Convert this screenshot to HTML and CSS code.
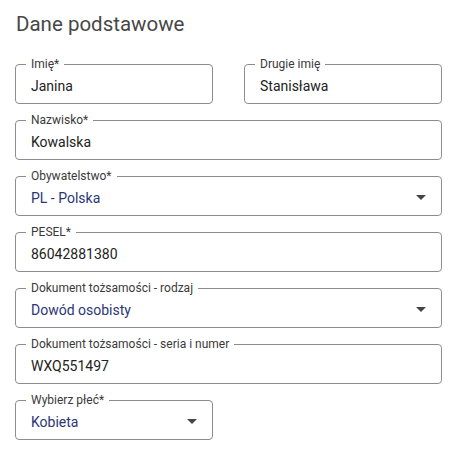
FILE: index.html
```html
<!DOCTYPE html>
<html lang="pl">
<head>
    <meta charset="UTF-8">
    <meta name="viewport" content="width=device-width, initial-scale=1.0">
    <title>Dane podstawowe</title>
    <link rel="stylesheet" href="styles.css">
</head>
<body>
    <div class="form">
        <h2 class="title">Dane podstawowe</h2>
        <div class="grid">
            <fieldset class="field">
                <legend>Imię*</legend>
                <div class="control"><input type="text" value="Janina"></div>
            </fieldset>
            <fieldset class="field">
                <legend>Drugie imię</legend>
                <div class="control"><input type="text" value="Stanisława"></div>
            </fieldset>
            <fieldset class="field wide">
                <legend>Nazwisko*</legend>
                <div class="control"><input type="text" value="Kowalska"></div>
            </fieldset>
            <fieldset class="field wide">
                <legend>Obywatelstwo*</legend>
                <div class="control">
                    <select><option>PL - Polska</option></select>
                    <svg class="arrow" width="10" height="5" viewBox="0 0 10 5"><path d="M0 0h10L5 5z"/></svg>
                </div>
            </fieldset>
            <fieldset class="field wide">
                <legend>PESEL*</legend>
                <div class="control"><input type="text" value="86042881380"></div>
            </fieldset>
            <fieldset class="field wide">
                <legend>Dokument tożsamości - rodzaj</legend>
                <div class="control">
                    <select><option>Dowód osobisty</option></select>
                    <svg class="arrow" width="10" height="5" viewBox="0 0 10 5"><path d="M0 0h10L5 5z"/></svg>
                </div>
            </fieldset>
            <fieldset class="field wide">
                <legend>Dokument tożsamości - seria i numer</legend>
                <div class="control"><input type="text" value="WXQ551497"></div>
            </fieldset>
            <fieldset class="field">
                <legend>Wybierz płeć*</legend>
                <div class="control">
                    <select><option>Kobieta</option></select>
                    <svg class="arrow" width="10" height="5" viewBox="0 0 10 5"><path d="M0 0h10L5 5z"/></svg>
                </div>
            </fieldset>
        </div>
    </div>
</body>
</html>
```

FILE: styles.css
```css
body {
    margin: 0;
    font-family: Roboto, "Noto Sans", sans-serif;
    background-color: #fff;
}
.form {
    padding: 0 19px 0 15px;
}
.title {
    font-size: 20.5px;
    font-weight: 400;
    line-height: 24px;
    color: #474747;
    margin: 12px 0 21px 1px;
}
.grid {
    display: grid;
    grid-template-columns: 1fr 1fr;
    column-gap: 31px;
    row-gap: 9px;
}
.field {
    margin: 0;
    padding: 0 10px;
    min-width: 0;
    border: 1px solid #8c8c8c;
    border-radius: 4px;
}
.wide {
    grid-column: 1 / 3;
}
.field legend {
    font-size: 12px;
    line-height: 14px;
    padding: 0 5px;
    color: #3a3a3a;
}
.control {
    display: flex;
    align-items: center;
    height: 27px;
    padding: 1px 5px 4px;
}
.control input,
.control select {
    flex: 1;
    min-width: 0;
    width: 100%;
    border: none;
    outline: none;
    background: transparent;
    padding: 0;
    margin: 0;
    font-family: inherit;
    font-size: 14px;
    color: #222;
    appearance: none;
}
.control select {
    color: #2c3677;
}
.arrow {
    fill: #444;
    margin-right: 0;
}
```
